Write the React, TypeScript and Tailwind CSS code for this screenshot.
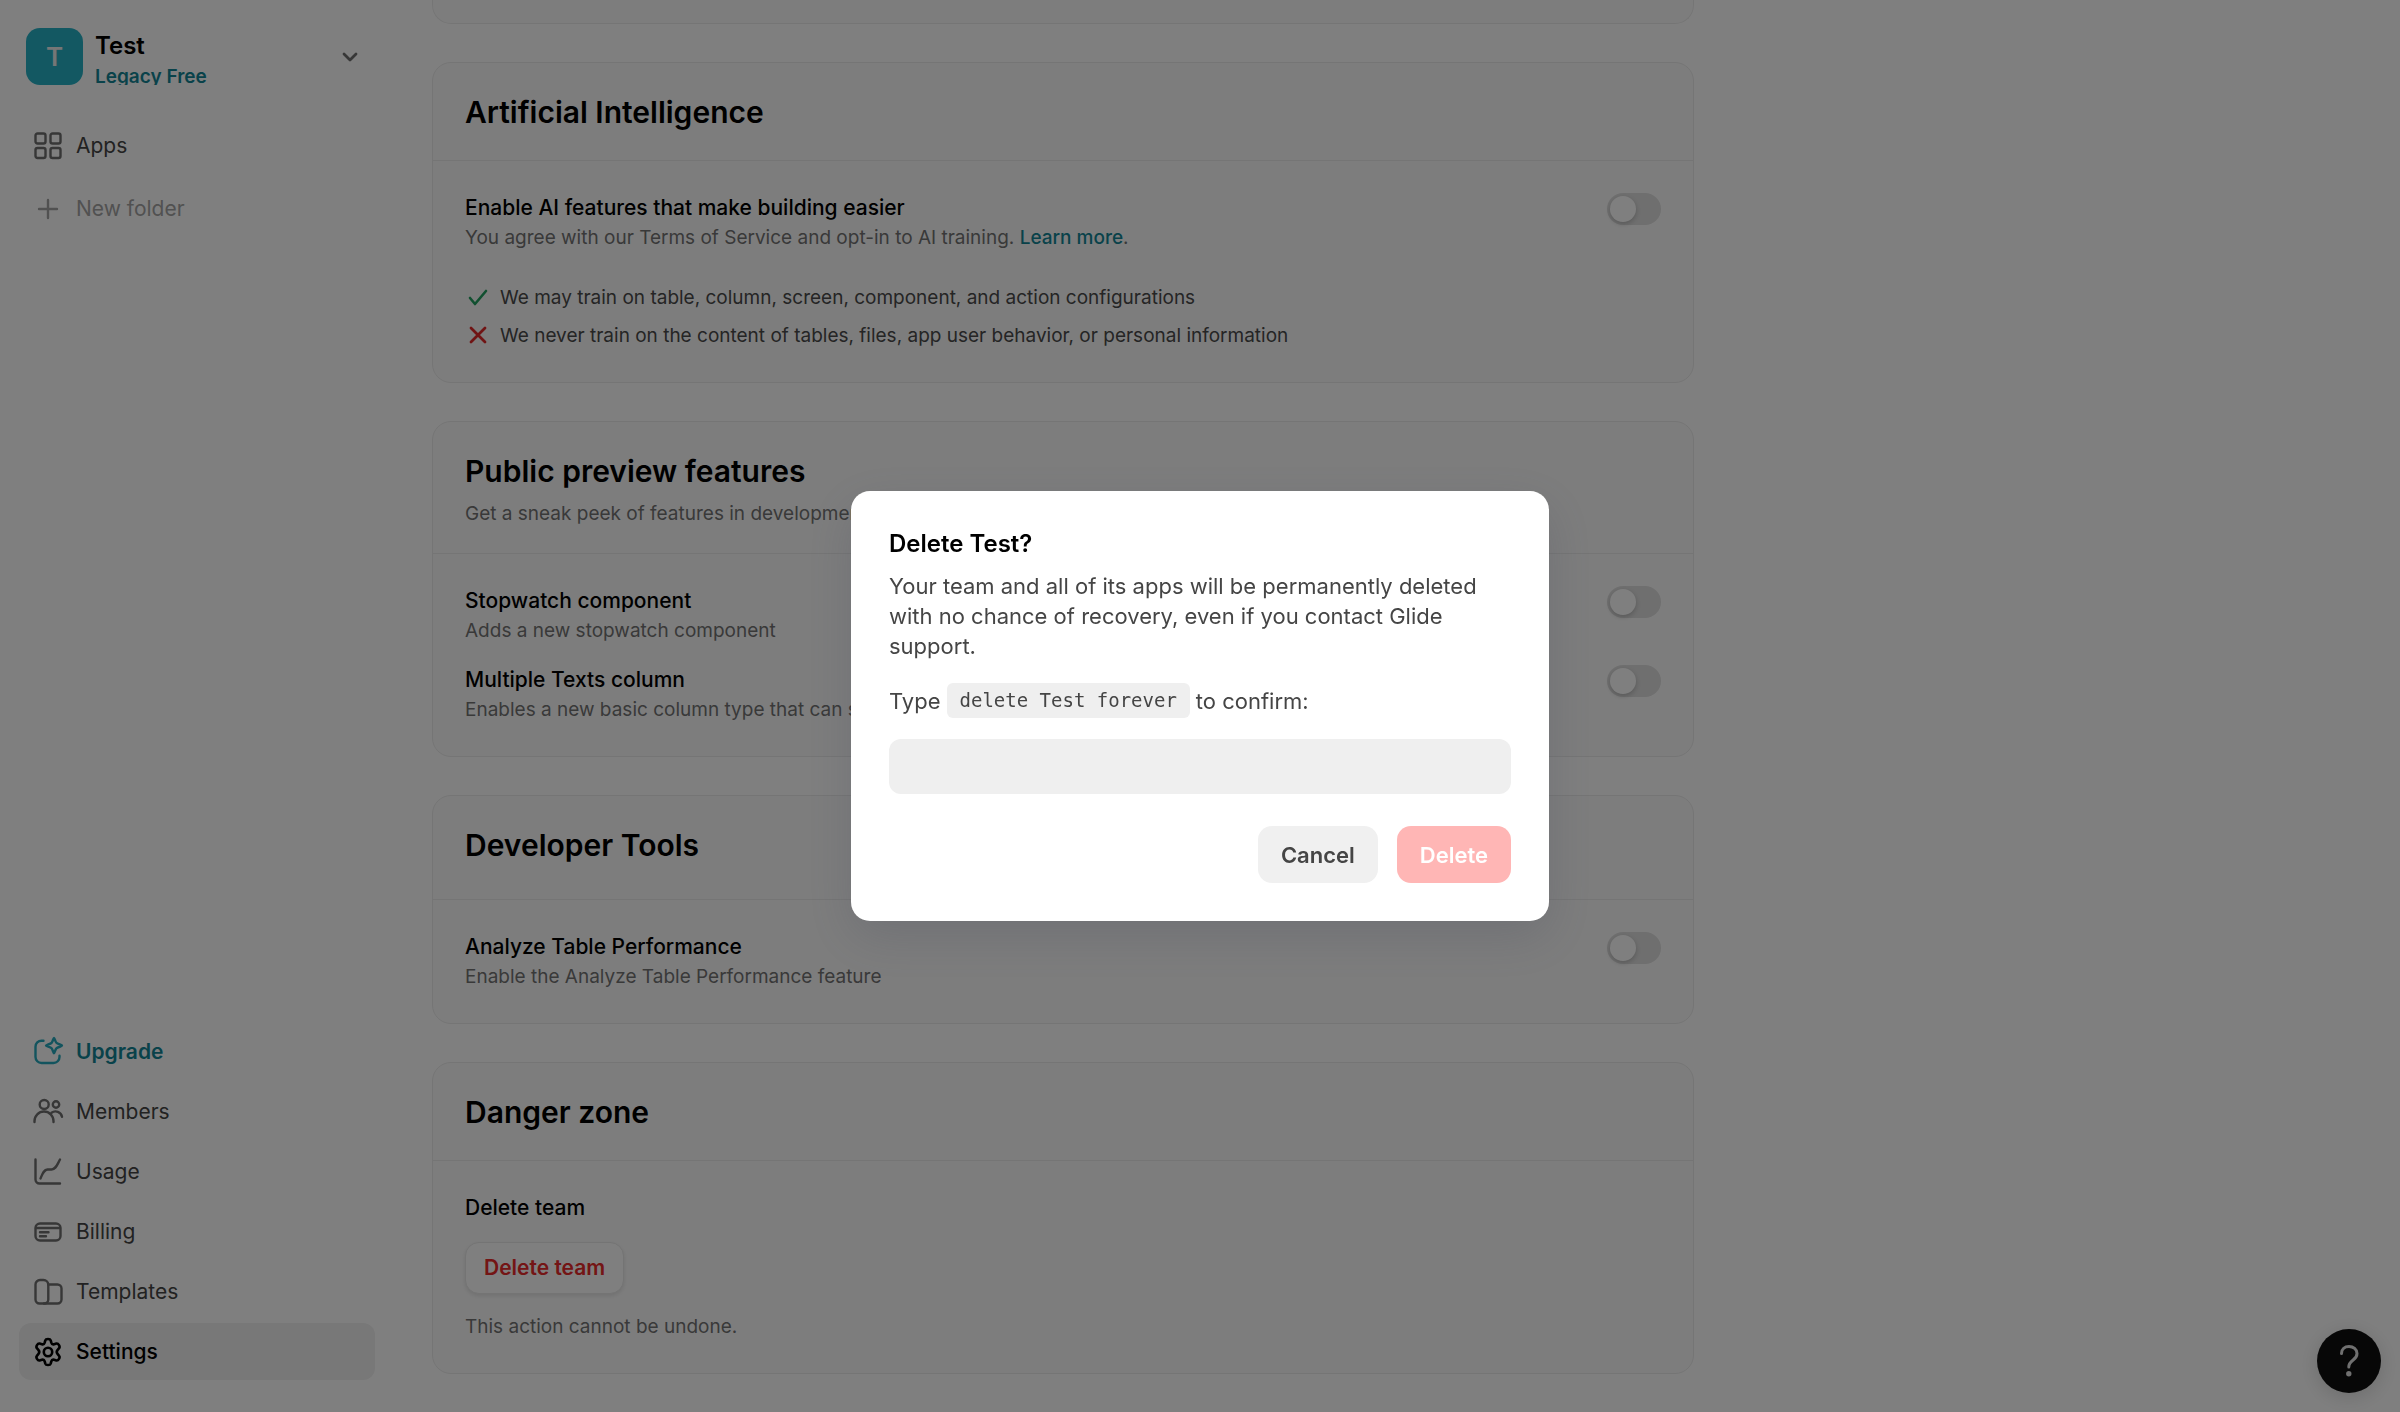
import React from "react";
import { clsx } from "clsx";

type IconProps = {
  children: React.ReactNode;
  width?: number;
};

const Icon = ({ children, width = 2.4 }: IconProps) => (
  <svg
    className="size-8 shrink-0"
    viewBox="0 0 32 32"
    fill="none"
    stroke="currentColor"
    strokeWidth={width}
    strokeLinecap="round"
    strokeLinejoin="round"
    aria-hidden="true"
  >
    {children}
  </svg>
);

const AppsIcon = () => (
  <Icon>
    <rect x="3.5" y="3.5" width="10" height="10" rx="2" />
    <rect x="18.5" y="3.5" width="10" height="10" rx="2" />
    <rect x="3.5" y="18" width="10" height="10" rx="2" />
    <rect x="18.5" y="18" width="10" height="10" rx="2" />
  </Icon>
);

const PlusIcon = () => (
  <Icon>
    <path d="M16 7v18M7 16h18" />
  </Icon>
);

const UpgradeIcon = () => (
  <Icon>
    <path d="M11.5 4.7H9.5a6 6 0 0 0-6 6V21a6 6 0 0 0 6 6h12a6 6 0 0 0 6-6v-1.2" />
    <path d="M22 2c.7 0 1.2 3.5 2.4 4.800S30 8.800 30 9.600s-4.300 1.400-5.600 2.700S22.700 17.200 22 17.200s-1.200-3.600-2.400-4.900S14 10.400 14 9.600s4.300-1.500 5.600-2.800S21.300 2 22 2Z" />
  </Icon>
);

const MembersIcon = () => (
  <Icon>
    <circle cx="12.200" cy="8.500" r="4.500" />
    <circle cx="24" cy="8.500" r="3.200" />
    <path d="M2.500 26v-1a9.500 9.500 0 0 1 19 0v1" />
    <path d="M19.500 16.800a6.600 6.600 0 0 1 10.500 4" />
  </Icon>
);

const UsageIcon = () => (
  <Icon>
    <path d="M3.500 3.500v20a4 4 0 0 0 4 4h20.500" />
    <path d="M8.500 22.500c2-4.500 3-8.700 7-9h4c4.500-.3 5.500-4.500 8.500-10" />
  </Icon>
);

const BillingIcon = () => (
  <Icon>
    <rect x="3.500" y="7.500" width="25" height="17" rx="4.500" />
    <path d="M4 12h24M8 16.300h8.500M8 20.300h6" />
  </Icon>
);

const TemplatesIcon = () => (
  <Icon>
    <path d="M16.300 23.500a4 4 0 0 1-4 4H7.500a4 4 0 0 1-4-4V8.500a4.500 4.500 0 0 1 4.500-4.500h3.500a4.800 4.800 0 0 1 4.800 4.500Z" />
    <path d="M16.300 8.500h9.200a4 4 0 0 1 4 4v11a4 4 0 0 1-4 4H12" />
  </Icon>
);

const SettingsIcon = () => (
  <Icon width={2.6}>
    <circle cx="16" cy="16" r="4.200" />
    <path d="M13.300 4.400C13.900 2.500 18.100 2.500 18.700 4.400l.6 2.200c.4 1.300 1.600 1.900 2.800 1.600l2.300-.7c1.900-.5 4.100 3.200 2.700 4.700l-1.600 1.900c-.9 1.100-.9 2.700 0 3.800l1.600 1.900c1.400 1.500-.8 5.200-2.700 4.700l-2.300-.7c-1.200-.3-2.400.3-2.800 1.600l-.6 2.200c-.6 1.900-4.800 1.900-5.400 0l-.6-2.200c-.4-1.300-1.600-1.900-2.800-1.600l-2.300.7c-1.900.5-4.100-3.200-2.700-4.700l1.600-1.900c.9-1.100.9-2.700 0-3.800l-1.600-1.900c-1.400-1.500.8-5.200 2.700-4.700l2.300.7c1.200.3 2.400-.3 2.800-1.600Z" />
  </Icon>
);

type NavItemProps = {
  icon: React.ReactNode;
  label: string;
  tone?: "default" | "muted" | "accent" | "active";
};

const NavItem = ({ icon, label, tone = "default" }: NavItemProps) => (
  <a
    href="#"
    className={clsx(
      "flex h-[57px] items-center gap-3 rounded-xl px-[13px] text-[21px]",
      tone === "default" && "text-[#454545]",
      tone === "muted" && "text-[#a3a3a3]",
      tone === "accent" && "font-semibold text-[#138595]",
      tone === "active" && "bg-[#f0f0f0] font-medium text-black"
    )}
  >
    <span
      className={clsx(
        tone === "default" && "text-[#6e6e6e]",
        tone === "accent" && "text-[#26a9bc]"
      )}
    >
      {icon}
    </span>
    {label}
  </a>
);

const Sidebar = () => (
  <aside className="flex w-[394px] shrink-0 flex-col justify-between px-[19px] pt-7 pb-8">
    <div>
      <button
        type="button"
        className="flex w-full items-center px-[7px] text-left"
      >
        <span className="flex size-[57px] items-center justify-center rounded-[14px] bg-[#26b0c4] text-[26px] font-semibold text-[#ededed]">
          T
        </span>
        <span className="ml-3 flex h-[57px] flex-1 flex-col overflow-hidden">
          <span className="text-[24px] leading-[36px] font-semibold text-black">
            Test
          </span>
          <span className="text-[19px] leading-[26px] font-semibold text-[#138595]">
            Legacy Free
          </span>
        </span>
        <svg
          className="mr-2 size-5 text-[#6e6e6e]"
          viewBox="0 0 20 20"
          fill="none"
          stroke="currentColor"
          strokeWidth="2.8"
          strokeLinecap="round"
          strokeLinejoin="round"
          aria-hidden="true"
        >
          <path d="m4 7 6 6 6-6" />
        </svg>
      </button>
      <nav className="mt-8 flex flex-col gap-[6px]">
        <NavItem icon={<AppsIcon />} label="Apps" />
        <NavItem icon={<PlusIcon />} label="New folder" tone="muted" />
      </nav>
    </div>
    <nav className="flex flex-col gap-[3px]">
      <NavItem icon={<UpgradeIcon />} label="Upgrade" tone="accent" />
      <NavItem icon={<MembersIcon />} label="Members" />
      <NavItem icon={<UsageIcon />} label="Usage" />
      <NavItem icon={<BillingIcon />} label="Billing" />
      <NavItem icon={<TemplatesIcon />} label="Templates" />
      <NavItem icon={<SettingsIcon />} label="Settings" tone="active" />
    </nav>
  </aside>
);

type SectionProps = {
  title: string;
  description?: string;
  headerClassName?: string;
  children: React.ReactNode;
};

const Section = ({
  title,
  description,
  headerClassName = "pb-[29px]",
  children,
}: SectionProps) => (
  <section className="rounded-[19px] border border-[#ebebeb] bg-[#fbfbfb]">
    <header
      className={clsx("border-b border-[#ebebeb] px-8 pt-[30px]", headerClassName)}
    >
      <h2 className="text-[30px] leading-[38px] font-semibold text-black">
        {title}
      </h2>
      {description && (
        <p className="mt-[9px] text-[19px] leading-[30px] text-[#737373]">
          {description}
        </p>
      )}
    </header>
    <div className="px-8 pt-8 pb-[31px]">{children}</div>
  </section>
);

type SettingProps = {
  id: string;
  label: string;
  children: React.ReactNode;
};

const Setting = ({ id, label, children }: SettingProps) => (
  <div className="flex items-start justify-between">
    <div className="leading-[30px]">
      <label htmlFor={id} className="block text-[21px] font-medium text-black">
        {label}
      </label>
      <p className="text-[19px] text-[#737373]">{children}</p>
    </div>
    <input
      id={id}
      type="checkbox"
      role="switch"
      className="h-8 w-[54px] appearance-none rounded-full bg-[#dedede] p-[3px] before:block before:size-[26px] before:rounded-full before:bg-white before:shadow-[0_2px_5px_rgba(0,0,0,0.2)]"
    />
  </div>
);

const DeleteDialog = () => (
  <div className="fixed inset-0 flex items-center justify-center bg-black/50">
    <form
      role="dialog"
      aria-modal="true"
      aria-labelledby="dialog-title"
      className="w-[698px] rounded-[19px] bg-white p-[38px] text-[22px] leading-[30px] text-[#454545] shadow-[0_16px_48px_rgba(62,65,86,0.2)]"
    >
      <h1 id="dialog-title" className="text-[24px] font-semibold text-black">
        Delete Test?
      </h1>
      <p className="mt-3">
        Your team and all of its apps will be permanently deleted with no chance
        of recovery, even if you contact Glide support.
      </p>
      <label htmlFor="confirm" className="mt-[22px] flex items-center gap-[6px]">
        Type
        <code className="rounded-md bg-[#efefef] px-[13px] font-['DejaVu_Sans_Mono',monospace] text-[19px] leading-[35px]">
          delete Test forever
        </code>
        to confirm:
      </label>
      <input
        id="confirm"
        type="text"
        className="mt-[21px] block h-[55px] w-full rounded-xl bg-[#efefef] px-4"
      />
      <div className="mt-8 flex justify-end gap-[19px] font-semibold">
        <button
          type="button"
          className="h-[57px] rounded-[14px] bg-[#f0f0f0] px-[23px]"
        >
          Cancel
        </button>
        <button
          type="submit"
          disabled
          className="h-[57px] rounded-[14px] bg-[#ffb6b5] px-[23px] text-white"
        >
          Delete
        </button>
      </div>
    </form>
  </div>
);

export default function App() {
  return (
    <div className="flex h-screen overflow-hidden bg-white font-['Inter',sans-serif]">
      <Sidebar />
      <main className="flex flex-1 flex-col px-[38px]">
        <div className="flex w-full max-w-[1262px] flex-col gap-[38px]">
          <div className="h-6 rounded-b-[19px] border border-t-0 border-[#ebebeb] bg-[#fbfbfb]" />
          <Section title="Artificial Intelligence">
            <Setting id="ai" label="Enable AI features that make building easier">
              You agree with our Terms of Service and opt-in to AI training.{" "}
              <a href="#" className="font-medium text-[#138595]">
                Learn more
              </a>
              .
            </Setting>
            <ul className="mt-[26px] -mb-1 text-[19px] leading-[38px] text-[#4a4a4a]">
              <li className="flex items-center gap-[9px]">
                <svg
                  className="size-[26px]"
                  viewBox="0 0 26 26"
                  fill="none"
                  stroke="#22a060"
                  strokeWidth="2.6"
                  strokeLinecap="round"
                  strokeLinejoin="round"
                  aria-hidden="true"
                >
                  <path d="m5 13 5 6L21 6" />
                </svg>
                We may train on table, column, screen, component, and action
                configurations
              </li>
              <li className="flex items-center gap-[9px]">
                <svg
                  className="size-[26px]"
                  viewBox="0 0 26 26"
                  fill="none"
                  stroke="#e02828"
                  strokeWidth="2.8"
                  strokeLinecap="round"
                  aria-hidden="true"
                >
                  <path d="m6 5 14 14M20 5 6 19" />
                </svg>
                We never train on the content of tables, files, app user
                behavior, or personal information
              </li>
            </ul>
          </Section>
          <Section
            title="Public preview features"
            description="Get a sneak peek of features in development"
            headerClassName="pb-6"
          >
            <div className="flex flex-col gap-[19px]">
              <Setting id="stopwatch" label="Stopwatch component">
                Adds a new stopwatch component
              </Setting>
              <Setting id="texts" label="Multiple Texts column">
                Enables a new basic column type that can split
              </Setting>
            </div>
          </Section>
          <Section title="Developer Tools" headerClassName="pb-[35px]">
            <Setting id="analyze" label="Analyze Table Performance">
              Enable the Analyze Table Performance feature
            </Setting>
          </Section>
          <Section title="Danger zone">
            <h3 className="text-[21px] leading-[30px] font-medium text-black">
              Delete team
            </h3>
            <button
              type="button"
              className="mt-[19px] block h-[52px] rounded-[14px] border border-[#e8e8e8] bg-white px-[18px] text-[21px] font-semibold text-[#e82a2a] shadow-[0_2px_4px_rgba(0,0,0,0.1)]"
            >
              Delete team
            </button>
            <p className="mt-[18px] text-[19px] leading-[30px] text-[#737373]">
              This action cannot be undone.
            </p>
          </Section>
        </div>
      </main>
      <button
        type="button"
        aria-label="Help"
        className="fixed right-[19px] bottom-[19px] flex size-16 items-center justify-center rounded-full bg-[#0f0f0f] text-[#e0e0e0] shadow-[0_4px_20px_rgba(0,0,0,0.15)]"
      >
        <svg
          className="size-8"
          viewBox="0 0 32 32"
          fill="none"
          stroke="currentColor"
          strokeWidth="3"
          strokeLinecap="round"
          aria-hidden="true"
        >
          <path d="M8.500 8.500C8.500 4 11.700 1.500 16 1.500s8 2.800 8 6.900c0 3-1.400 4.700-3.900 6.600-3 2.300-4.300 4-4.300 7" />
          <circle cx="15.800" cy="28.800" r="2.700" fill="currentColor" stroke="none" />
        </svg>
      </button>
      <DeleteDialog />
    </div>
  );
}
